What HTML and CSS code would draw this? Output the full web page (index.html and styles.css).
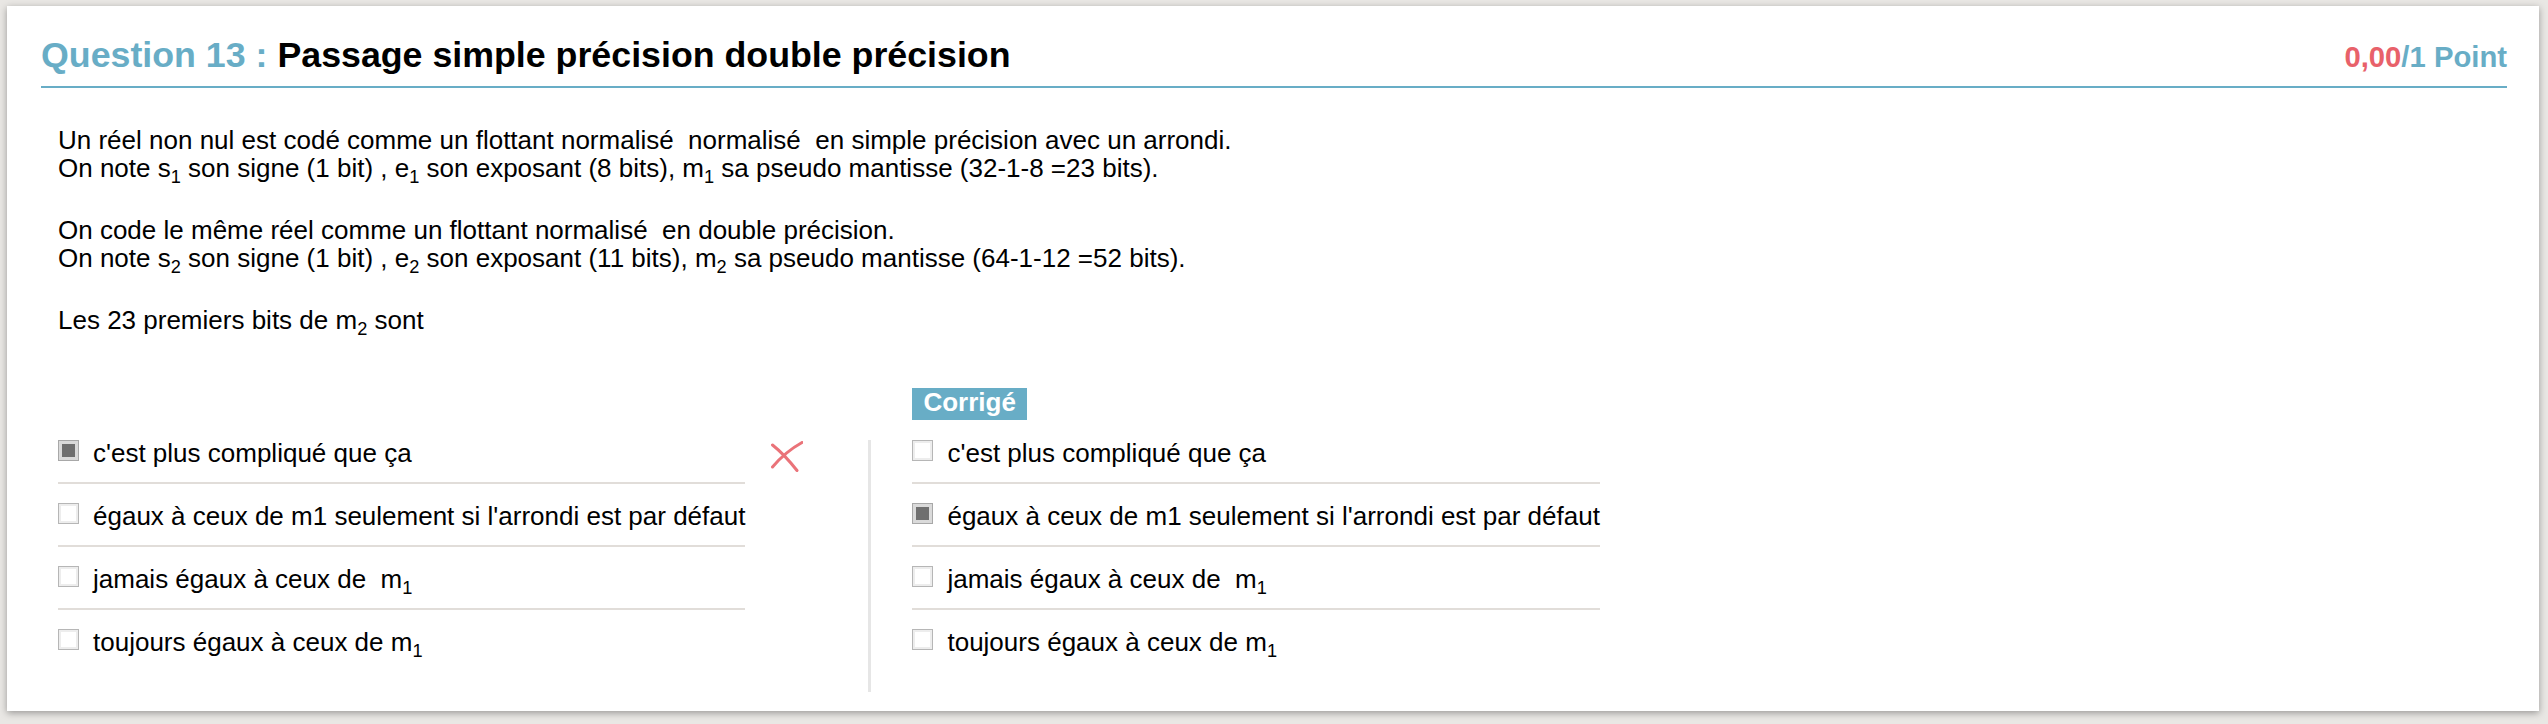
FILE: index.html
```html
<!DOCTYPE html>
<html lang="fr">
<head>
<meta charset="utf-8">
<title>Question 13</title>
<link rel="stylesheet" href="styles.css">
</head>
<body>
<div class="card">
  <div class="q-head">
    <h2 class="q-title"><span class="q-num">Question 13 :</span> Passage simple précision double précision</h2>
    <div class="q-score"><span class="q-got">0,00</span>/1 Point</div>
  </div>
  <div class="q-content">
    <div class="q-body">
      <p>Un réel non nul est codé comme un flottant normalisé&nbsp; normalisé&nbsp; en simple précision avec un arrondi.<br>On note s<sub>1</sub> son signe (1 bit) , e<sub>1</sub> son exposant (8 bits), m<sub>1</sub> sa pseudo mantisse (32-1-8 =23 bits).</p>
      <p>On code le même réel comme un flottant normalisé&nbsp; en double précision.<br>On note s<sub>2</sub> son signe (1 bit) , e<sub>2</sub> son exposant (11 bits), m<sub>2</sub> sa pseudo mantisse (64-1-12 =52 bits).</p>
      <p>Les 23 premiers bits de m<sub>2</sub> sont</p>
    </div>
    <div class="answers">
      <div class="badge">Corrigé</div>
      <ul class="opts student">
        <li class="opt"><span class="cb on"></span><span>c'est plus compliqué que ça</span></li>
        <li class="opt"><span class="cb"></span><span>égaux à ceux de m1 seulement si l'arrondi est par défaut</span></li>
        <li class="opt"><span class="cb"></span><span>jamais égaux à ceux de&nbsp; m<sub>1</sub></span></li>
        <li class="opt"><span class="cb"></span><span>toujours égaux à ceux de m<sub>1</sub></span></li>
      </ul>
      <svg class="xmark" viewBox="0 0 32 31" width="32" height="31" aria-hidden="true">
        <path d="M1.5 4 Q13 13 26 29.5"/>
        <path d="M31 1.5 Q14 11 1.5 26"/>
      </svg>
      <div class="divider"></div>
      <ul class="opts correction">
        <li class="opt"><span class="cb"></span><span>c'est plus compliqué que ça</span></li>
        <li class="opt"><span class="cb on"></span><span>égaux à ceux de m1 seulement si l'arrondi est par défaut</span></li>
        <li class="opt"><span class="cb"></span><span>jamais égaux à ceux de&nbsp; m<sub>1</sub></span></li>
        <li class="opt"><span class="cb"></span><span>toujours égaux à ceux de m<sub>1</sub></span></li>
      </ul>
    </div>
  </div>
</div>
</body>
</html>
```

FILE: styles.css
```css
html {
  background: #e9e7e4;
}
body {
  margin: 0;
  padding: 6px 9px 13px 7px;
  font-family: "Liberation Sans", Arial, Helvetica, sans-serif;
  color: #000;
}
.card {
  background: #fff;
  box-shadow: 0 2px 7px rgba(0, 0, 0, 0.35);
  padding: 0 32px 19px 34px;
}
.q-head {
  display: flex;
  justify-content: space-between;
  align-items: baseline;
  padding: 29px 0 11px;
  border-bottom: 2px solid #68adc6;
}
.q-title {
  margin: 0;
  font-size: 35.75px;
  font-weight: bold;
  line-height: 40px;
}
.q-num {
  color: #68adc6;
}
.q-score {
  font-size: 29.25px;
  font-weight: bold;
  color: #68adc6;
}
.q-got {
  color: #e8616a;
}
.q-content {
  padding-left: 17px;
}
.q-body {
  margin-top: 38px;
  font-size: 26px;
  line-height: 28px;
}
.q-body p {
  margin: 0;
}
.q-body p + p {
  margin-top: 34px;
}
sub {
  font-size: 0.7em;
  line-height: 0;
  vertical-align: -6px;
}
.answers {
  display: grid;
  grid-template-columns: auto auto auto auto;
  justify-content: start;
  margin-top: 54px;
}
.badge {
  grid-column: 4;
  grid-row: 1;
  justify-self: start;
  margin: 0 0 1px 41px;
  padding: 0 11px 4px;
  background: #68adc6;
  color: #fff;
  font-size: 26px;
  font-weight: bold;
  line-height: 28px;
}
.opts {
  list-style: none;
  margin: 0;
  padding: 0 0 21px;
  grid-row: 2;
}
.student {
  grid-column: 1;
}
.correction {
  grid-column: 4;
  margin-left: 41px;
}
.opt {
  display: flex;
  align-items: flex-start;
  gap: 14px;
  padding: 19px 0 16px;
  border-bottom: 2px solid #e1ddd9;
  font-size: 26px;
  line-height: 26px;
  white-space: nowrap;
}
.opt:last-child {
  border-bottom: 0;
}
.cb {
  flex: none;
  width: 21px;
  height: 21px;
  box-sizing: border-box;
  border: 1px solid #b6b6b6;
  box-shadow: inset 0 0 0 2px #ededed;
  background: #fff;
}
.cb.on {
  border-color: #a8a8a8;
  box-shadow: inset 0 0 0 3px #dadada;
  background: #6f6f6f;
}
.xmark {
  grid-column: 2;
  grid-row: 2;
  margin: 20px 0 0 26px;
  fill: none;
  stroke: #e8646b;
  stroke-width: 3;
  stroke-linecap: round;
  opacity: 0.9;
  filter: blur(0.4px);
}
.divider {
  grid-column: 3;
  grid-row: 2;
  width: 3px;
  margin: 19px 0 0 65px;
  background: #e6e6e6;
}
```
